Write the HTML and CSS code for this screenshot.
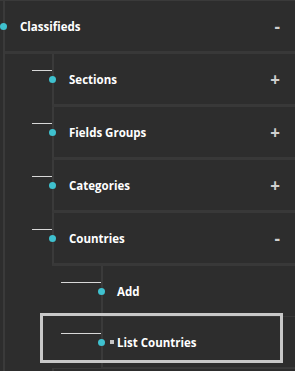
FILE: index.html
```html
<!DOCTYPE html>
<html lang="en">
<head>
    <meta charset="UTF-8">
    <meta name="viewport" content="width=device-width, initial-scale=1.0">
    <title>Menu tree</title>
    <link rel="stylesheet" href="styles.css">
</head>
<body>
    <div class="tree">
        <ul class="level level-1">
            <li class="item">
                <div class="row">
                    <span class="dot"></span>
                    <span class="label">Classifieds</span>
                    <span class="toggle">-</span>
                </div>

                <ul class="level level-2">
                    <li class="item">
                        <div class="row">
                            <span class="dot"></span>
                            <span class="label">Sections</span>
                            <span class="toggle">+</span>
                        </div>
                    </li>
                    <li class="item">
                        <div class="row">
                            <span class="dot"></span>
                            <span class="label">Fields Groups</span>
                            <span class="toggle">+</span>
                        </div>
                    </li>
                    <li class="item">
                        <div class="row">
                            <span class="dot"></span>
                            <span class="label">Categories</span>
                            <span class="toggle">+</span>
                        </div>
                    </li>
                    <li class="item">
                        <div class="row">
                            <span class="dot"></span>
                            <span class="label">Countries</span>
                            <span class="toggle">-</span>
                        </div>

                        <ul class="level level-3">
                            <li class="item">
                                <div class="row">
                                    <span class="dot"></span>
                                    <span class="label">Add</span>
                                </div>
                            </li>
                            <li class="item selected">
                                <div class="row">
                                    <span class="dot"></span>
                                    <span class="bullet"></span>
                                    <span class="label">List Countries</span>
                                </div>
                            </li>
                        </ul>
                    </li>
                    <li class="item">
                        <div class="row row-next"></div>
                    </li>
                </ul>
            </li>
        </ul>
    </div>
</body>
</html>
```

FILE: styles.css
```css
* {
    box-sizing: border-box;
}

html,
body {
    margin: 0;
    padding: 0;
    height: 100%;
    overflow: hidden;
}

body {
    font-family: "Open Sans", "Noto Sans", sans-serif;
    background-color: #2d2d2d;
    color: #fff;
}

.tree {
    border-top: 1px solid #3a3a3a;
}

.level {
    list-style: none;
    margin: 0;
    padding: 0;
}

.level-1 > .item {
    border-left: 2px solid #3a3a3a;
    margin-left: 3px;
    min-height: 400px;
}

.level-2 {
    margin-left: 47px;
}

.level-3 {
    margin-left: 49px;
}

.row {
    position: relative;
    display: flex;
    align-items: center;
    height: 53px;
    border-bottom: 3px solid #383838;
}

.level-2 .row {
    border-left: 2px solid #3a3a3a;
}

.level-3 .row {
    height: 51px;
    border-bottom-width: 1px;
}

/* connector line to the parent */
.level-2 .row::before,
.level-3 .row::before {
    content: "";
    position: absolute;
    top: 16px;
    left: -22px;
    width: 20px;
    height: 1px;
    background-color: #d8d8d8;
}

.level-3 .row::before {
    left: -42px;
    width: 40px;
}

.dot {
    flex: none;
    width: 7px;
    height: 7px;
    margin-left: -5px;
    border-radius: 50%;
    background-color: #3fc1cf;
}

.label {
    margin-left: 13px;
    font-size: 11.5px;
    font-weight: 700;
    color: #fff;
}

.level-3 .label {
    margin-left: 12px;
}

.bullet {
    flex: none;
    width: 4px;
    height: 4px;
    margin-left: 5px;
    margin-right: -9px;
    background-color: #c4c4c4;
}

.toggle {
    margin-left: auto;
    padding-right: 15px;
    font-size: 17px;
    font-weight: 700;
    color: #cfcfcf;
}

.selected .row::after {
    content: "";
    position: absolute;
    top: -4px;
    left: -63px;
    width: 237px;
    height: 44px;
    border: 3px solid #c8c8c8;
}

.row-next {
    height: 20px;
    border-top: 1px solid #3a3a3a;
    border-bottom: none;
}

.row-next::before {
    display: none;
}
```
